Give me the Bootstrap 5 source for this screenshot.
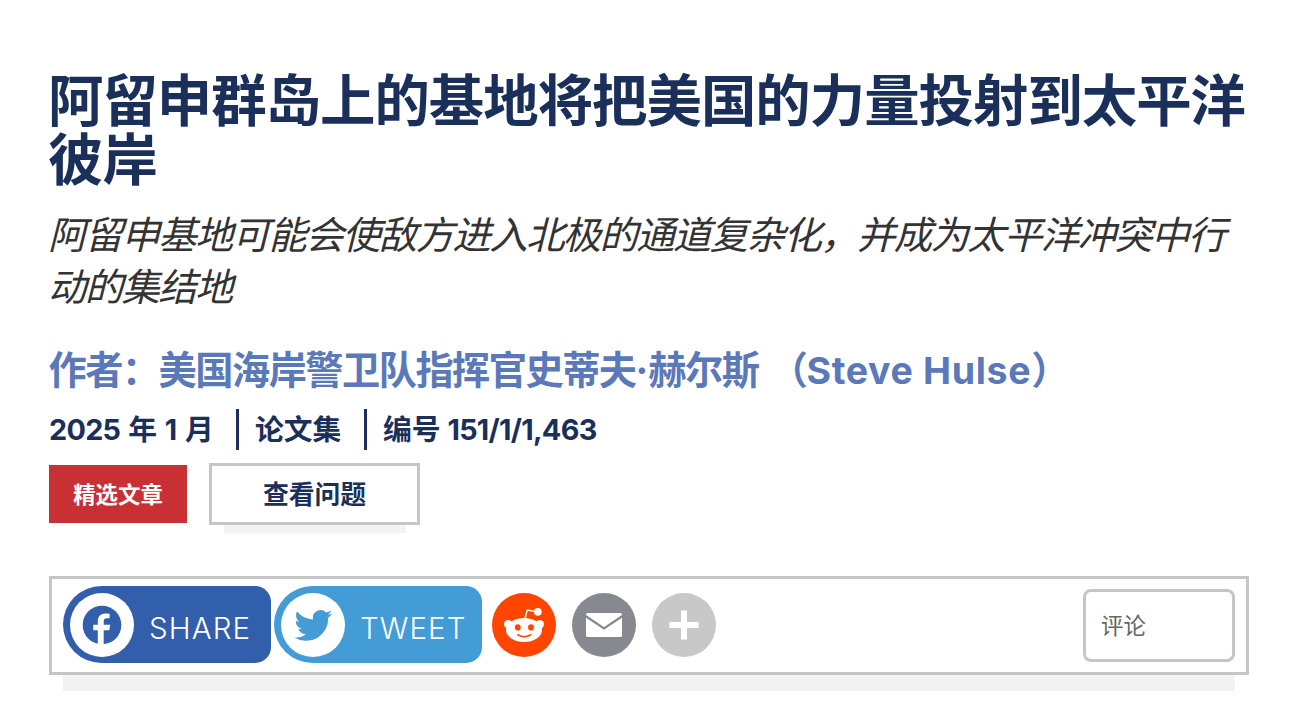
<!DOCTYPE html>
<html lang="zh-CN">
<head>
    <meta charset="UTF-8">
    <title>阿留申群岛上的基地将把美国的力量投射到太平洋彼岸</title>
    <meta name="viewport" content="width=device-width, initial-scale=1">
    <link href="https://cdn.jsdelivr.net/npm/bootstrap@5.3.2/dist/css/bootstrap.min.css" rel="stylesheet">
    <style>
        body { font-family: Inter, "Noto Sans CJK SC", sans-serif; color: #1a2f5a; overflow: hidden; }
        .article { padding: 72px 56px 0 49px; }
        .headline { font-size: 55.4px; line-height: 58.5px; letter-spacing: -.98px; color: #1a2f5a; margin-left: -1px; }
        .deck { font-size: 38.4px; line-height: 52px; letter-spacing: -1.62px; color: #333; margin: 17px 0 0 -1px; font-family: "Noto Sans CJK SC", sans-serif; }
        .byline { font-size: 38.2px; line-height: 52px; letter-spacing: -1.5px; word-spacing: 4px; color: #5b78b8; margin: 34px 0 0 -.5px; }
        .byline .latin { font-size: 37.5px; letter-spacing: .65px; word-spacing: 0; }
        .byline .dot { letter-spacing: 0; font-family: Inter, sans-serif; }
        .meta { font-size: 28.8px; line-height: 42px; height: 41px; margin-top: 12px; color: #1a2f5a; }
        .meta .num { letter-spacing: -.7px; }
        .meta .divided { border-left: 3px solid #1a2f5a; padding-left: 16px; }
        .m-date { width: 187px; word-spacing: 1px; }
        .m-kind { width: 128px; }
        .actions { margin-top: 13px; }
        .tag { width: 138px; height: 58px; background: #c83033; font-size: 22.4px; margin: 2px 22px 0 0; padding-top: 1px; }
        .issue-btn { width: 211px; height: 62px; border: 3px solid #c6c6c6; border-radius: 0; font-size: 25.8px; color: #1a2f5a; background: #fff; }
        .issue-btn span { padding-top: 2px; }
        .under { background: #f3f3f3; }
        .issue-under { width: 182px; height: 8px; margin-left: 15px; }
        .share-bar { height: 99px; border: 3px solid #c6c6c6; margin-top: 43px; padding-left: 11px; padding-right: 11px; }
        .share-under { height: 16px; margin: 0 14px; }
        .pill { height: 77px; width: 208px; margin-bottom: 2px; padding-left: 7px; border-radius: 39px 16px 16px 39px; color: #fff; font-family: Inter, sans-serif; font-size: 29.5px; font-weight: 300; letter-spacing: 1.1px; }
        .pill svg { flex: none; }
        .pill-fb { background: #315fac; margin-right: 3px; }
        .pill-tw { background: #449cd7; margin-right: 10px; }
        .pill span { margin: 8px 0 0 15px; }
        .round-icons { margin-bottom: 1px; }
        .comment-box { width: 152px; height: 73px; border: 3px solid #c6c6c6; border-radius: 8px; padding-left: 15px; font-size: 22.4px; color: #666; background: #fff; }
    </style>
</head>
<body class="bg-white">
    <main class="article">
        <h1 class="headline fw-bold mb-0 text-nowrap">阿留申群岛上的基地将把美国的力量投射到太平洋<br>彼岸</h1>
        <p class="deck fst-italic mb-0 text-nowrap">阿留申基地可能会使敌方进入北极的通道复杂化，并成为太平洋冲突中行<br>动的集结地</p>
        <div class="byline fw-bold text-nowrap">作者：美国海岸警卫队指挥官史蒂夫<span class="dot">·</span>赫尔斯 （<span class="latin">Steve Hulse</span>）</div>

        <div class="meta d-flex fw-bold text-nowrap">
            <div class="m-date"><span class="num">2025</span> 年 1 月</div>
            <div class="divided m-kind">论文集</div>
            <div class="divided m-num">编号 <span class="num">151/1/1,463</span></div>
        </div>

        <div class="actions d-flex align-items-start">
            <div class="tag d-flex align-items-center justify-content-center text-white fw-bold">精选文章</div>
            <div class="issue">
                <a class="btn issue-btn d-flex align-items-center justify-content-center p-0 fw-bold" href="#"><span>查看问题</span></a>
                <div class="under issue-under"></div>
            </div>
        </div>

        <div class="share-bar d-flex align-items-center">
            <a class="pill pill-fb d-flex align-items-center text-decoration-none" href="#">
                <svg width="64" height="64" viewBox="0 0 64 64"><circle cx="32" cy="32" r="32" fill="#fff"/><circle cx="32" cy="32" r="19.3" fill="#315fac"/><path fill="#fff" d="M27.8 52V37.3h-4.6v-5.5h4.6v-3.6c0-5 2.9-7.8 7.6-7.8 2.1 0 4.2.4 4.2.4v4.5h-2.4c-2.5 0-3.5 1.2-3.5 3v3.5h6.6l-1 5.5h-5.6V52z"/></svg>
                <span>SHARE</span>
            </a>
            <a class="pill pill-tw d-flex align-items-center text-decoration-none" href="#">
                <svg width="64" height="64" viewBox="0 0 32 32"><circle cx="16" cy="16" r="16" fill="#fff"/><path transform="translate(0 .4)" fill="#449cd7" d="M25.6 9.9a7.7 7.7 0 0 1-2.2.6 3.9 3.9 0 0 0 1.7-2.1c-.8.4-1.6.8-2.5.9a3.9 3.9 0 0 0-6.6 3.5 11 11 0 0 1-8-4 3.9 3.9 0 0 0 1.2 5.2 3.8 3.8 0 0 1-1.8-.5v.1a3.9 3.9 0 0 0 3.1 3.8 3.9 3.9 0 0 1-1.8.1 3.9 3.9 0 0 0 3.7 2.7 7.8 7.8 0 0 1-5.7 1.6 11 11 0 0 0 16.9-9.8 8 8 0 0 0 2-2.1z"/></svg>
                <span>TWEET</span>
            </a>
            <div class="round-icons d-flex gap-3">
                <svg width="64" height="64" viewBox="0 0 64 64"><circle cx="32" cy="32" r="32" fill="#ff4500"/><g fill="#fff"><circle cx="16.2" cy="31.2" r="4.2"/><circle cx="47.8" cy="31.2" r="4.2"/><ellipse cx="32" cy="37" rx="18" ry="12"/><circle cx="45.8" cy="18.8" r="3.9"/></g><path d="M32.8 26l2.5-9 9 1.8" fill="none" stroke="#fff" stroke-width="1.5"/><g fill="#ff4500"><ellipse cx="25.8" cy="34.4" rx="2.9" ry="3.1"/><ellipse cx="39" cy="34.4" rx="2.9" ry="3.1"/></g><path d="M25.8 41.8q6.4 4 12.8 0" fill="none" stroke="#ff4500" stroke-width="1.6" stroke-linecap="round"/></svg>
                <svg width="64" height="64" viewBox="0 0 64 64"><circle cx="32" cy="32" r="32" fill="#888990"/><rect x="14" y="20" width="36" height="24" rx="1.5" fill="#fff"/><path d="M13.5 23L32 35.5 50.5 23" fill="none" stroke="#888990" stroke-width="2.2"/></svg>
                <svg width="64" height="64" viewBox="0 0 64 64"><circle cx="32" cy="32" r="32" fill="#c8c8c8"/><path d="M17.5 32h29M32 17.5v29" stroke="#fff" stroke-width="6"/></svg>
            </div>
            <div class="comment-box ms-auto d-flex align-items-center">评论</div>
        </div>
        <div class="under share-under"></div>
    </main>

    <script src="https://cdn.jsdelivr.net/npm/bootstrap@5.3.2/dist/js/bootstrap.bundle.min.js"></script>
</body>
</html>
